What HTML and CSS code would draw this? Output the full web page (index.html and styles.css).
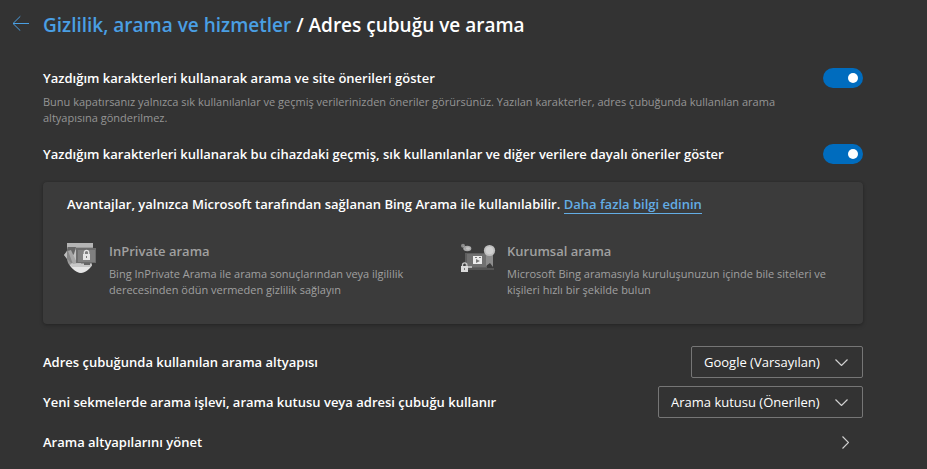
FILE: index.html
```html
<!DOCTYPE html>
<html lang="tr">
<head>
    <meta charset="UTF-8">
    <meta name="viewport" content="width=device-width, initial-scale=1.0">
    <title>Adres çubuğu ve arama</title>
    <link rel="stylesheet" href="styles.css">
</head>
<body>
    <header class="page-header">
        <button class="back-button" type="button" aria-label="Geri">
            <svg width="17" height="16" viewBox="0 0 17 16" fill="none" stroke="currentColor">
                <path d="M17 8.500H1M8.300 1.300L1 8.500l7.300 7.200"/>
            </svg>
        </button>
        <h1><a href="#">Gizlilik, arama ve hizmetler</a> / Adres çubuğu ve arama</h1>
    </header>

    <main class="settings">
        <!-- Toggles -->
        <div class="toggle-row">
            <label for="suggestions">Yazdığım karakterleri kullanarak arama ve site önerileri göster</label>
            <input class="toggle" type="checkbox" role="switch" id="suggestions" checked>
        </div>
        <p class="description">Bunu kapatırsanız yalnızca sık kullanılanlar ve geçmiş verilerinizden öneriler görürsünüz. Yazılan karakterler, adres çubuğunda kullanılan arama altyapısına gönderilmez.</p>
        <div class="toggle-row">
            <label for="history">Yazdığım karakterleri kullanarak bu cihazdaki geçmiş, sık kullanılanlar ve diğer verilere dayalı öneriler göster</label>
            <input class="toggle" type="checkbox" role="switch" id="history" checked>
        </div>

        <!-- Bing benefits -->
        <section class="card">
            <h2>Avantajlar, yalnızca Microsoft tarafından sağlanan Bing Arama ile kullanılabilir. <a href="#">Daha fazla bilgi edinin</a></h2>
            <div class="benefits">
                <div class="benefit">
                    <svg class="benefit-icon" width="36" height="36" viewBox="0 0 36 36">
                        <path fill="#9a9a9a" d="M4 2h26v15c0 8-6 12-13 15C10 29 4 24 4 17z"/>
                        <path fill="#b4b4b4" d="M4 2h26v4H4z"/>
                        <path fill="#c0c0c0" d="M14 7v15h4v3H9l-2-9z"/>
                        <path fill="#666666" d="M5 6h8l-2 7-4 5-4-6z"/>
                        <path fill="#858585" d="M1 14l4-5 9 13H8z"/>
                        <path fill="#a6a6a6" d="M5 10l3-1 6 13-4 1z"/>
                        <path fill="#bdbdbd" d="M1 14l3-4v8z"/>
                        <path fill="#e6e6e6" d="M7 24h22c-2 4-7 8-11 8S9 28 7 24z"/>
                        <path fill="#c8c8c8" d="M7 23h22l-1 3H9z"/>
                        <rect x="13" y="7" width="20" height="15" fill="#6c6c6c"/>
                        <rect x="15" y="9" width="17" height="12" fill="#808080"/>
                        <path fill="#666666" d="M21 22h6v2h-6z"/>
                        <path fill="none" stroke="#e4e4e4" stroke-width="1.300" d="M21.300 13v-1.500a2.200 2.200 0 0 1 4.400 0V13"/>
                        <rect x="20" y="13" width="7" height="6" fill="#e4e4e4"/>
                        <rect x="23" y="15" width="1" height="2" fill="#777777"/>
                    </svg>
                    <div class="benefit-text">
                        <h3>InPrivate arama</h3>
                        <p>Bing InPrivate Arama ile arama sonuçlarından veya ilgililik derecesinden ödün vermeden gizlilik sağlayın</p>
                    </div>
                </div>
                <div class="benefit">
                    <svg class="benefit-icon" width="36" height="36" viewBox="0 0 36 36">
                        <rect x="4" y="12" width="22" height="15" fill="#5e5e5e"/>
                        <rect x="6" y="13" width="19" height="13" fill="#707070"/>
                        <path fill="#555555" d="M5 27h28v2H7z"/>
                        <path fill="#8c8c8c" d="M25 13h7v13l-3-4-4 3z"/>
                        <circle cx="28.500" cy="9.500" r="5.600" fill="#bebebe"/>
                        <circle cx="28.500" cy="9.500" r="3.800" fill="#d0d0d0"/>
                        <ellipse cx="6.300" cy="7.500" rx="4" ry="2.800" fill="#ababab"/>
                        <circle cx="2" cy="4.700" r="2" fill="#8a8a8a"/>
                        <path stroke="#a0a0a0" d="M2 5l4 3"/>
                        <ellipse cx="7" cy="7.500" rx="2" ry="1.200" fill="#c4c4c4"/>
                        <rect x="12" y="15" width="9" height="8" fill="#ececec"/>
                        <path fill="#787878" d="M14 16h2v1h-2zM18 16h2v1h-2zM15 18l4 2-4 2z"/>
                        <path fill="none" stroke="#c6c6c6" stroke-width="1.300" d="M1.500 25.500V24a2.200 2.200 0 0 1 4.400 0v1.500"/>
                        <rect x="0" y="25" width="7" height="6" fill="#dadada"/>
                        <rect x="7" y="25" width="4" height="2" fill="#b5b5b5"/>
                        <rect x="3" y="27" width="1" height="2" fill="#777777"/>
                    </svg>
                    <div class="benefit-text">
                        <h3>Kurumsal arama</h3>
                        <p>Microsoft Bing aramasıyla kuruluşunuzun içinde bile siteleri ve kişileri hızlı bir şekilde bulun</p>
                    </div>
                </div>
            </div>
        </section>

        <!-- Search options -->
        <div class="option-row">
            <label for="engine">Adres çubuğunda kullanılan arama altyapısı</label>
            <div class="select-box">
                <select id="engine">
                    <option>Google (Varsayılan)</option>
                </select>
                <svg class="chevron" width="13" height="7" viewBox="0 0 13 7" fill="none" stroke="currentColor" stroke-width="1.200">
                    <path d="M0.500 0.500l6 6 6-6"/>
                </svg>
            </div>
        </div>
        <div class="option-row">
            <label for="new-tab">Yeni sekmelerde arama işlevi, arama kutusu veya adresi çubuğu kullanır</label>
            <div class="select-box">
                <select id="new-tab">
                    <option>Arama kutusu (Önerilen)</option>
                </select>
                <svg class="chevron" width="13" height="7" viewBox="0 0 13 7" fill="none" stroke="currentColor" stroke-width="1.200">
                    <path d="M0.500 0.500l6 6 6-6"/>
                </svg>
            </div>
        </div>
        <a class="option-row manage-link" href="#">
            <span>Arama altyapılarını yönet</span>
            <svg width="7" height="13" viewBox="0 0 7 13" fill="none" stroke="currentColor" stroke-width="1.200">
                <path d="M0.500 0.500l6 6-6 6"/>
            </svg>
        </a>
    </main>
</body>
</html>
```
FILE: styles.css
```css
* {
    box-sizing: border-box;
    margin: 0;
    padding: 0;
}

body {
    min-height: 100vh;
    padding: 9px 12px 0;
    background-color: #333333;
    color: #ffffff;
    font-family: "Segoe UI", "Open Sans", "Noto Sans", sans-serif;
    font-size: 13px;
    line-height: 20px;
}

/* Page title */
.page-header {
    display: flex;
    align-items: center;
    gap: 14px;
    height: 32px;
}

.back-button {
    width: 17px;
    height: 16px;
    margin-bottom: 4px;
    background: none;
    border: none;
    color: #4a9fe3;
    cursor: pointer;
}

.back-button svg {
    display: block;
}

h1 {
    font-size: 19px;
    font-weight: 600;
    line-height: 32px;
}

h1 a {
    color: #4a9fe3;
    text-decoration: none;
}

.settings {
    max-width: 851px;
    padding-left: 31px;
    padding-top: 27px;
}

/* Toggle rows */
.toggle-row {
    display: flex;
    justify-content: space-between;
    align-items: center;
    gap: 16px;
}

label,
.manage-link {
    font-weight: 600;
}

.toggle {
    appearance: none;
    flex: none;
    display: flex;
    align-items: center;
    justify-content: flex-end;
    width: 40px;
    height: 20px;
    padding-right: 5px;
    border-radius: 10px;
    background-color: #006cbe;
    cursor: pointer;
}

.toggle::before {
    content: "";
    width: 10px;
    height: 10px;
    border-radius: 50%;
    background-color: #ffffff;
}

.toggle:not(:checked) {
    justify-content: flex-start;
    padding-left: 5px;
    background-color: #767676;
}

.description {
    max-width: 768px;
    margin: 6px 0 18px;
    color: #959595;
    font-size: 11px;
    line-height: 16px;
}

/* Benefits card */
.card {
    margin: 18px 0;
    padding: 12px 4px 26px 20px;
    border-radius: 4px;
    background-color: #3b3b3b;
    box-shadow: 0 2px 4px rgba(0, 0, 0, 0.2), 0 0 2px rgba(0, 0, 0, 0.2);
}

.card h2 {
    padding-left: 4px;
    font-size: 13px;
    font-weight: 600;
}

.card h2 a {
    border-bottom: 1px solid #63ade5;
    color: #63ade5;
    text-decoration: none;
}

.benefits {
    display: grid;
    grid-template-columns: 1fr 1fr;
    margin-top: 27px;
}

.benefit {
    display: flex;
    gap: 10px;
}

.benefit-icon {
    flex: none;
}

.benefit-text {
    padding-right: 16px;
    color: #a0a0a0;
}

.benefit h3 {
    font-size: 13px;
    font-weight: 600;
}

.benefit p {
    margin-top: 5px;
    font-size: 11px;
    line-height: 16px;
}

/* Search options */
.option-row {
    display: flex;
    justify-content: space-between;
    align-items: center;
    height: 40px;
}

.select-box {
    display: grid;
    align-items: center;
}

.select-box select,
.chevron {
    grid-area: 1 / 1;
}

.select-box select {
    appearance: none;
    height: 32px;
    padding: 0 42px 0 12px;
    border: 1px solid #767676;
    border-radius: 2px;
    background-color: #333333;
    color: #ffffff;
    font: inherit;
}

.chevron {
    justify-self: end;
    margin-right: 15px;
    color: #d0d0d0;
    pointer-events: none;
}

.manage-link {
    padding-right: 14px;
    color: #ffffff;
    text-decoration: none;
}

.manage-link svg {
    color: #d0d0d0;
}
```
